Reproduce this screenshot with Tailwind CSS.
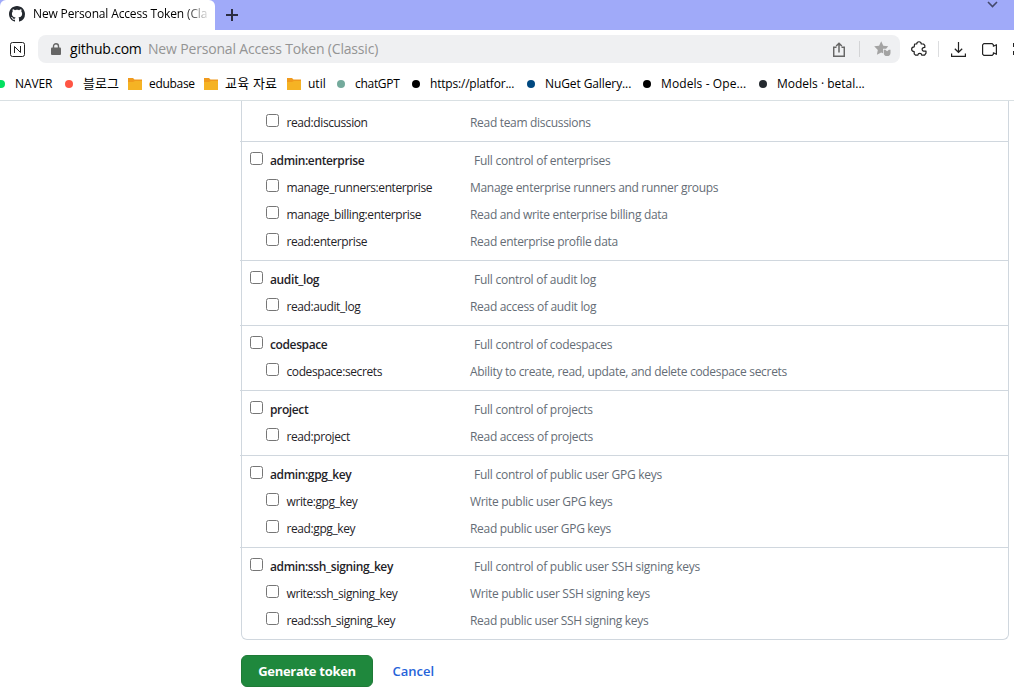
<!DOCTYPE html>
<html lang="en">
<head>
  <meta charset="UTF-8" />
  <meta name="viewport" content="width=device-width, initial-scale=1.0" />
  <title>New Personal Access Token (Classic)</title>
  <script src="https://cdn.jsdelivr.net/npm/@tailwindcss/browser@4"></script>
</head>
<body class="h-[695px] w-[1014px] overflow-hidden bg-white font-['Open_Sans','Noto_Sans_CJK_KR',sans-serif] text-xs text-[#1f2328]">

  <!-- Tab strip -->
  <div class="flex h-[30px] justify-between bg-[#a0aaf9]">
    <div class="flex">
      <div class="flex w-[215px] items-center rounded-t-md bg-white pl-[9px] pb-0.5">
        <svg class="size-4 shrink-0" viewBox="0 0 16 16" fill="#24292f"><path d="M8 0C3.58 0 0 3.58 0 8c0 3.54 2.29 6.53 5.47 7.59.4.07.55-.17.55-.38 0-.19-.01-.82-.01-1.49-2.01.37-2.53-.49-2.69-.94-.09-.23-.48-.94-.82-1.13-.28-.15-.68-.52-.01-.53.63-.01 1.08.58 1.23.82.72 1.21 1.87.87 2.33.66.07-.52.28-.87.51-1.07-1.78-.2-3.64-.89-3.64-3.95 0-.87.31-1.59.82-2.15-.08-.2-.36-1.02.08-2.12 0 0 .67-.21 2.2.82.64-.18 1.32-.27 2-.27s1.36.09 2 .27c1.53-1.04 2.2-.82 2.2-.82.44 1.1.16 1.92.08 2.12.51.56.82 1.27.82 2.15 0 3.07-1.87 3.75-3.65 3.95.29.25.54.73.54 1.48 0 1.07-.01 1.93-.01 2.2 0 .21.15.46.55.38A8.01 8.01 0 0 0 16 8c0-4.42-3.58-8-8-8Z"/></svg>
        <div class="ml-2 w-[178px] whitespace-nowrap bg-linear-to-r from-black from-85% to-transparent bg-clip-text text-xs tracking-[-0.15px] text-transparent">New Personal Access Token (Cla</div>
      </div>
      <svg class="ml-[11px] mt-[9px] size-3" viewBox="0 0 12 12" stroke="#2b2d42" stroke-width="2"><path d="M6 0v12M0 6h12"/></svg>
    </div>
    <svg class="mr-4 mt-px h-[7px] w-[11px]" viewBox="0 0 11 7" fill="none" stroke="#44496b" stroke-width="1.6"><path d="m1 1 4.5 4.5L10 1"/></svg>
  </div>

  <!-- Address bar -->
  <div class="flex h-[38px] items-center">
    <svg class="ml-2.5 size-[15px] shrink-0" viewBox="0 0 15 15" fill="none" stroke="#222"><rect x=".5" y=".5" width="14" height="14" rx="2"/><path d="M4.5 11V4.5l6 6V4"/></svg>
    <div class="ml-[13px] flex h-7 w-[862px] shrink-0 items-center rounded-lg bg-[#eff0f2] whitespace-nowrap text-sm">
      <svg class="ml-[13px] h-3 w-2.5" viewBox="0 0 10 12"><rect y="4.5" width="10" height="7.5" rx="1" fill="#666"/><path d="M2.5 5V3.2a2.5 2.5 0 0 1 5 0V5" fill="none" stroke="#666" stroke-width="1.4"/></svg>
      <span class="ml-[9px] w-[78px] tracking-[-0.2px] text-black">github.com</span>
      <span class="tracking-[-0.17px] text-[#949494]">New Personal Access Token (Classic)</span>
      <div class="ml-auto flex items-center">
        <svg class="h-[15px] w-3" viewBox="0 0 12 15" fill="none" stroke="#666" stroke-width="1.5"><path d="M3.5 5.2H.7v9h10.6v-9H8.5M6 10.5V1.2M3.2 4 6 1.2 8.8 4"/></svg>
        <div class="ml-[14px] h-4 w-px bg-[#d3d4d6]"></div>
        <svg class="ml-[14px] mr-[9px] h-4 w-[17px]" viewBox="0 0 17 16" fill="#a3a3a3"><path d="m7.2.3 2.1 4.5 4.9.5-2.1 2.4H9v4.6l-1.8-.9-4.3 2.4.9-4.9L.2 5.3l4.9-.5z"/><path d="M9.7 8.7h1.6l1.8 1.5 1.8-1.5h1.6v3a3.4 3.4 0 0 1-6.8 0z"/></svg>
      </div>
    </div>
    <svg class="ml-[11px] h-4 w-4 shrink-0" viewBox="0 0 16 16" fill="none" stroke="#222" stroke-width="1.2" stroke-linejoin="round"><path d="M3.6 3h2.1c.2-3 4.4-3 4.6 0h2.2l1.3 1.3v2.1c-3.6-.2-3.6 4 0 3.8h1.2v2l-1.4 2h-2.8c-.3-2.4-3.7-2.4-4 0H4.5l-1.3-1.3v-2.3c-3.4-.2-3.4-4.5 0-4.7z"/></svg>
    <div class="ml-[11px] h-4 w-px shrink-0 bg-[#dcdddf]"></div>
    <svg class="ml-3 h-[15px] w-[15px] shrink-0" viewBox="0 0 15 15" fill="none" stroke="#222" stroke-width="1.2"><path d="M7.5 0v10.2M3.8 6.7l3.7 3.6 3.7-3.6M.6 11.5v2.9h13.8v-2.9"/></svg>
    <svg class="ml-4 h-[13px] w-[15px] shrink-0" viewBox="0 0 15 13" fill="none" stroke="#222" stroke-width="1.2" stroke-linejoin="round"><path d="M1.8.6h8.4l1.2 1.2v1.4l3-1.5v9.6l-3-1.5v1.4l-1.2 1.2H1.8L.6 11.2V1.8z"/></svg>
    <div class="ml-[16px] flex shrink-0 flex-col gap-1"><i class="size-1 bg-[#222]"></i><i class="size-1 bg-[#222]"></i></div>
  </div>

  <!-- Bookmarks -->
  <div class="flex h-[33px] items-center border-b border-[#d9e0e3] whitespace-nowrap text-xs text-black">
    <div class="-ml-[3px] flex w-[68px] shrink-0 items-center gap-2.5"><i class="size-2 rounded-full bg-[#03e060]"></i><span class="tracking-[-0.1px]">NAVER</span></div>
    <div class="flex w-[63px] shrink-0 items-center gap-2.5"><i class="size-2 rounded-full bg-[#ff5544]"></i><span class="text-[13px]">블로그</span></div>
    <div class="flex w-[76px] shrink-0 items-center gap-[7px]"><svg class="h-3 w-3.5" viewBox="0 0 14 12"><path d="M0 0h5l1.5 1.5H14V12H0z" fill="#f09a1d"/><path d="M0 4h5l2-1h7v9H0z" fill="#f5b324"/></svg><span class="tracking-[-0.3px]">edubase</span></div>
    <div class="flex w-[83px] shrink-0 items-center gap-[7px]"><svg class="h-3 w-3.5" viewBox="0 0 14 12"><path d="M0 0h5l1.5 1.5H14V12H0z" fill="#f09a1d"/><path d="M0 4h5l2-1h7v9H0z" fill="#f5b324"/></svg><span class="text-[13px] tracking-[0.2px]">교육 자료</span></div>
    <div class="flex w-[50px] shrink-0 items-center gap-[7px]"><svg class="h-3 w-3.5" viewBox="0 0 14 12"><path d="M0 0h5l1.5 1.5H14V12H0z" fill="#f09a1d"/><path d="M0 4h5l2-1h7v9H0z" fill="#f5b324"/></svg><span>util</span></div>
    <div class="flex w-[75px] shrink-0 items-center gap-2.5"><i class="size-2 rounded-full bg-[#74aa9c]"></i><span class="tracking-[-0.3px]">chatGPT</span></div>
    <div class="flex w-[115px] shrink-0 items-center gap-2.5"><i class="size-2 rounded-full bg-black"></i><span class="tracking-[-0.2px]">https://platfor...</span></div>
    <div class="flex w-[116px] shrink-0 items-center gap-2.5"><i class="size-2 rounded-full bg-[#004880]"></i><span class="tracking-[-0.1px]">NuGet Gallery...</span></div>
    <div class="flex w-[116px] shrink-0 items-center gap-2.5"><i class="size-2 rounded-full bg-black"></i><span class="tracking-[0.1px]">Models - Ope...</span></div>
    <div class="flex shrink-0 items-center gap-2.5"><i class="size-2 rounded-full bg-[#24292f]"></i><span>Models · betal...</span></div>
  </div>

  <!-- Token scopes -->
  <div id="scopes" class="ml-[241px] w-[768px] rounded-b-md border-x border-b border-[#d0d7de] pt-[3px]"></div>

  <!-- Actions -->
  <div class="ml-[241px] mt-[15px] flex items-center text-[13px] whitespace-nowrap">
    <button class="h-8 w-[132px] rounded-md border border-[#1f7a37] bg-[#1f883d] pt-px font-bold tracking-[-0.3px] text-white">Generate token</button>
    <a href="#" class="ml-[19.5px] pt-px font-semibold text-[#2563d9]">Cancel</a>
  </div>

  <script>
    // Each group: [scope, description], the first row is the parent scope
    const groups = [
      [['', ''], ['read:discussion', 'Read team discussions']],
      [['admin:enterprise', 'Full control of enterprises'],
       ['manage_runners:enterprise', 'Manage enterprise runners and runner groups'],
       ['manage_billing:enterprise', 'Read and write enterprise billing data'],
       ['read:enterprise', 'Read enterprise profile data']],
      [['audit_log', 'Full control of audit log'],
       ['read:audit_log', 'Read access of audit log']],
      [['codespace', 'Full control of codespaces'],
       ['codespace:secrets', 'Ability to create, read, update, and delete codespace secrets']],
      [['project', 'Full control of projects'],
       ['read:project', 'Read access of projects']],
      [['admin:gpg_key', 'Full control of public user GPG keys'],
       ['write:gpg_key', 'Write public user GPG keys'],
       ['read:gpg_key', 'Read public user GPG keys']],
      [['admin:ssh_signing_key', 'Full control of public user SSH signing keys'],
       ['write:ssh_signing_key', 'Write public user SSH signing keys'],
       ['read:ssh_signing_key', 'Read public user SSH signing keys']]
    ];

    const box = '<input type="checkbox" class="mt-1 size-[13px] shrink-0 self-start" />';

    document.getElementById('scopes').innerHTML = groups.map((rows) => {
      const items = rows.map(([name, text], i) => {
        if (!name) return '';
        if (i === 0) {
          return `<li class="flex h-[27px] items-center pt-px pl-2">${box}<b class="ml-[7px] w-[204px] font-semibold tracking-[-0.38px]">${name}</b><span class="tracking-[-0.26px] text-[#656d76]">${text}</span></li>`;
        }
        return `<li class="flex h-[27px] items-center pt-px pl-6">${box}<span class="ml-[7.5px] w-[183.5px] tracking-[-0.4px]">${name}</span><span class="tracking-[-0.31px] text-[#656d76]">${text}</span></li>`;
      }).join('');
      return `<ul class="-ml-0.5 border-t border-[#d0d7de] py-[5px] pl-0.5 text-xs whitespace-nowrap first:border-t-0">${items}</ul>`;
    }).join('');
  </script>
</body>
</html>
